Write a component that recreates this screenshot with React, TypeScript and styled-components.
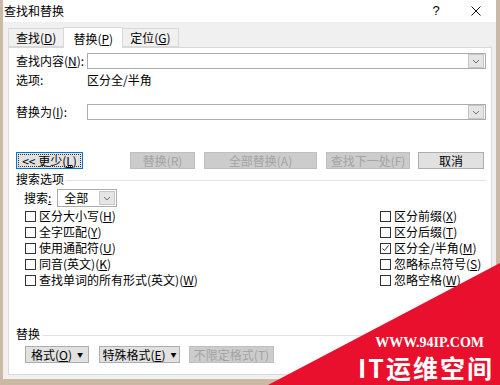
import React from 'react';
import styled, { createGlobalStyle } from 'styled-components';

const GlobalStyle = createGlobalStyle`
  html, body {
    margin: 0;
    padding: 0;
    background: #cbb8a5;
  }
  body {
    width: 500px;
    height: 385px;
    overflow: hidden;
    font-family: "Noto Sans CJK SC", "Noto Sans", sans-serif;
    font-size: 12px;
    color: #000;
  }
`;

const Screen = styled.div`
  position: relative;
  width: 500px;
  height: 385px;
  overflow: hidden;
`;

const Dialog = styled.div`
  margin-left: 3px;
  width: 493px;
  height: 378px;
  background: #f0f0f0;
  display: flex;
  flex-direction: column;
  box-shadow: 0 1px 0 #f8f6f4;
`;

const TitleBar = styled.div`
  height: 22px;
  background: #fff;
  display: flex;
  align-items: center;
  padding-left: 1px;
  line-height: 14px;
`;

const TitleText = styled.span`
  flex: 1;
`;

const TitleButton = styled.span`
  width: 40px;
  display: flex;
  justify-content: center;
  align-items: center;
  font-family: "Liberation Sans", sans-serif;
  font-size: 13px;
`;

const TabStrip = styled.div`
  display: flex;
  align-items: flex-end;
  height: 25px;
  padding-left: 5px;
`;

const Tab = styled.div<{ $active?: boolean }>`
  height: ${p => (p.$active ? 20 : 17)}px;
  padding: 0 ${p => (p.$active ? 9 : 7)}px;
  display: flex;
  align-items: center;
  background: ${p => (p.$active ? '#fff' : '#f0f0f0')};
  border: 1px solid #d9d9d9;
  border-bottom: ${p => (p.$active ? 'none' : '1px solid #d9d9d9')};
  margin-right: -1px;
  position: relative;
  z-index: ${p => (p.$active ? 1 : 0)};
  margin-bottom: ${p => (p.$active ? -1 : 0)}px;
`;

const Key = styled.u`
  text-decoration-thickness: 1px;
  text-underline-offset: 1px;
`;

const Panel = styled.div`
  flex: 1;
  margin: 0 4px 3px 5px;
  background: #fff;
  border: 1px solid #d9d9d9;
  padding: 5px 5px 11px 7px;
  display: flex;
  flex-direction: column;
`;

const FieldGrid = styled.div`
  display: grid;
  grid-template-columns: 71px 1fr;
  align-items: center;
`;

const Label = styled.span`
  line-height: 14px;
  white-space: nowrap;
`;

const Combo = styled.div<{ $width?: string; $h?: number }>`
  height: ${p => p.$h || 14}px;
  width: ${p => p.$width || 'auto'};
  border: 1px solid #acacac;
  background: #fff;
  display: flex;
  justify-content: flex-end;
  align-items: center;
  padding-right: 1px;
`;

const ComboValue = styled.span`
  flex: 1;
  padding-left: 6px;
  line-height: 14px;
`;

const DropButton = styled.span`
  width: 14px;
  height: 12px;
  background: #e5e5e5;
  border: 1px solid #c6c6c6;
  display: flex;
  align-items: center;
  justify-content: center;
`;

const OptionsRow = styled.div`
  grid-column: 1 / 3;
  display: grid;
  grid-template-columns: 71px 1fr;
  height: 14px;
  margin: 4px 0 17px;
`;

const ButtonRow = styled.div`
  display: flex;
  margin-top: 32px;
`;

const Button = styled.button<{ $w: number; $ml?: number; $disabled?: boolean; $focus?: boolean }>`
  width: ${p => p.$w}px;
  height: 17px;
  margin-left: ${p => p.$ml || 0}px;
  padding: 0;
  font: inherit;
  line-height: 14px;
  white-space: nowrap;
  color: ${p => (p.$disabled ? '#a3a3a3' : '#000')};
  background: ${p => (p.$disabled ? '#cccccc' : '#e1e1e1')};
  border: 1px solid ${p => (p.$focus ? '#0078d7' : p.$disabled ? '#bfbfbf' : '#adadad')};
  outline: ${p => (p.$focus ? '1px dotted #333' : 'none')};
  outline-offset: -3px;
  display: flex;
  align-items: center;
  justify-content: center;
  gap: 5px;
`;

const GroupHeader = styled.div<{ $mt: number }>`
  display: flex;
  align-items: center;
  margin-top: ${p => p.$mt}px;
  height: 14px;
  line-height: 14px;
  &::after {
    content: '';
    flex: 1;
    height: 1px;
    background: #e3e3e3;
    margin-left: 2px;
    margin-top: 2px;
  }
`;

const SearchRow = styled.div`
  display: flex;
  align-items: center;
  margin: 3px 0 0 8px;
  gap: 6px;
`;

const CheckGrid = styled.div`
  display: grid;
  grid-template-columns: 355px 1fr;
  grid-auto-rows: 16px;
  margin: 1px 0 0 9px;
`;

const CheckItem = styled.label`
  display: flex;
  align-items: center;
  gap: 3px;
  line-height: 14px;
  white-space: nowrap;
`;

const Box = styled.span`
  width: 9px;
  height: 9px;
  border: 1px solid #333;
  background: #fff;
  display: flex;
  align-items: center;
  justify-content: center;
`;

const BottomGroup = styled.div`
  margin-top: auto;
`;

const BottomButtons = styled.div`
  display: flex;
  margin: 5px 0 0 9px;
`;

const Caret = styled.span`
  font-size: 6px;
  line-height: 8px;
`;

const Watermark = styled.div`
  position: absolute;
  inset: 0;
  pointer-events: none;
  background: #e8102c;
  clip-path: polygon(500px 263px, 500px 385px, 268px 385px);
`;

const WatermarkText = styled.div`
  position: absolute;
  right: 6px;
  bottom: 5px;
  color: #fff;
  display: flex;
  flex-direction: column;
  align-items: flex-end;
`;

const Site = styled.span`
  font-family: "Liberation Serif", serif;
  font-weight: bold;
  font-size: 14px;
  line-height: 15px;
  margin: 0 10px 4px 0;
`;

const Brand = styled.span`
  font-family: "Noto Sans CJK SC", sans-serif;
  font-weight: bold;
  font-size: 25px;
  line-height: 26px;
  letter-spacing: 2px;
`;

const Chevron = () => (
  <svg width="8" height="5" viewBox="0 0 8 5">
    <path d="M1 1 L4 4 L7 1" fill="none" stroke="#707070" strokeWidth="1" />
  </svg>
);

const Check = () => (
  <svg width="9" height="9" viewBox="0 0 9 9">
    <path d="M1.5 4.5 L3.5 6.5 L7.5 1.5" fill="none" stroke="#333" strokeWidth="1" />
  </svg>
);

const CloseIcon = () => (
  <svg width="10" height="10" viewBox="0 0 10 10">
    <path d="M0.5 0.5 L9.5 9.5 M9.5 0.5 L0.5 9.5" stroke="#111" strokeWidth="1" />
  </svg>
);

const leftChecks = [
  ['区分大小写', 'H'],
  ['全字匹配', 'Y'],
  ['使用通配符', 'U'],
  ['同音(英文)', 'K'],
  ['查找单词的所有形式(英文)', 'W'],
];

const rightChecks = [
  ['区分前缀', 'X', false],
  ['区分后缀', 'T', false],
  ['区分全/半角', 'M', true],
  ['忽略标点符号', 'S', false],
  ['忽略空格', 'W', false],
] as const;

const CheckBox = ({ text, k, on }: { text: string; k: string; on?: boolean }) => (
  <CheckItem>
    <Box>{on && <Check />}</Box>
    <span>
      {text}(<Key>{k}</Key>)
    </span>
  </CheckItem>
);

export default function App() {
  return (
    <Screen>
      <GlobalStyle />
      <Dialog>
        <TitleBar>
          <TitleText>查找和替换</TitleText>
          <TitleButton>?</TitleButton>
          <TitleButton>
            <CloseIcon />
          </TitleButton>
        </TitleBar>
        <TabStrip>
          <Tab>
            <span>
              查找(<Key>D</Key>)
            </span>
          </Tab>
          <Tab $active>
            <span>
              替换(<Key>P</Key>)
            </span>
          </Tab>
          <Tab>
            <span>
              定位(<Key>G</Key>)
            </span>
          </Tab>
        </TabStrip>
        <Panel>
          <FieldGrid>
            <Label>
              查找内容(<Key>N</Key>):
            </Label>
            <Combo>
              <DropButton>
                <Chevron />
              </DropButton>
            </Combo>
            <OptionsRow>
              <Label>选项:</Label>
              <Label>区分全/半角</Label>
            </OptionsRow>
            <Label>
              替换为(<Key>I</Key>):
            </Label>
            <Combo>
              <DropButton>
                <Chevron />
              </DropButton>
            </Combo>
          </FieldGrid>

          <ButtonRow>
            <Button $w={67} $focus>
              <span>
                &lt;&lt; 更少(<Key>L</Key>)
              </span>
            </Button>
            <Button $w={65} $ml={47} $disabled>
              <span>替换(R)</span>
            </Button>
            <Button $w={113} $ml={9} $disabled>
              <span>全部替换(A)</span>
            </Button>
            <Button $w={84} $ml={9} $disabled>
              <span>查找下一处(F)</span>
            </Button>
            <Button $w={66} $ml={8}>
              <span>取消</span>
            </Button>
          </ButtonRow>

          <GroupHeader $mt={3}>搜索选项</GroupHeader>
          <SearchRow>
            <Label>
              搜索<Key>:</Key>
            </Label>
            <Combo $width="57px" $h={16}>
              <ComboValue>全部</ComboValue>
              <DropButton>
                <Chevron />
              </DropButton>
            </Combo>
          </SearchRow>

          <CheckGrid>
            {leftChecks.map(([t, k], i) => (
              <React.Fragment key={t}>
                <CheckBox text={t} k={k} />
                <CheckBox text={rightChecks[i][0]} k={rightChecks[i][1]} on={rightChecks[i][2]} />
              </React.Fragment>
            ))}
          </CheckGrid>

          <BottomGroup>
            <GroupHeader $mt={0}>替换</GroupHeader>
            <BottomButtons>
              <Button $w={64}>
                <span>
                  格式(<Key>O</Key>)
                </span>
                <Caret>▼</Caret>
              </Button>
              <Button $w={81} $ml={10}>
                <span>
                  特殊格式(<Key>E</Key>)
                </span>
                <Caret>▼</Caret>
              </Button>
              <Button $w={85} $ml={9} $disabled>
                <span>不限定格式(T)</span>
              </Button>
            </BottomButtons>
          </BottomGroup>
        </Panel>
      </Dialog>
      <Watermark>
        <WatermarkText>
          <Site>WWW.94IP.COM</Site>
          <Brand>IT运维空间</Brand>
        </WatermarkText>
      </Watermark>
    </Screen>
  );
}
